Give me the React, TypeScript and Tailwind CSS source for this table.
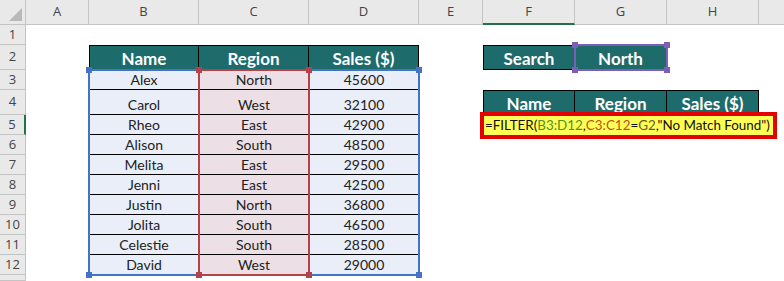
const colLetters = ['A', 'B', 'C', 'D', 'E', 'F', 'G', 'H'];

const rows: [string, string, string][] = [
  ['Alex', 'North', '45600'],
  ['Carol', 'West', '32100'],
  ['Rheo', 'East', '42900'],
  ['Alison', 'South', '48500'],
  ['Melita', 'East', '29500'],
  ['Jenni', 'East', '42500'],
  ['Justin', 'North', '36800'],
  ['Jolita', 'South', '46500'],
  ['Celestie', 'South', '28500'],
  ['David', 'West', '29000'],
];

const headCell = 'flex items-end justify-center pb-0 bg-[#1e6b6c] text-white font-bold text-[17px] leading-[20px] border-y border-r border-black';
const dataCell = 'flex items-end justify-center pb-0 text-[14px] leading-[18px] text-[#222] border-b border-black';

const Handle = ({ pos, color }: { pos: string; color: string }) => (
  <span className={`absolute w-[6px] h-[6px] ${pos} ${color}`} />
);

const Corners = ({ color }: { color: string }) => (
  <>
    <Handle pos="-left-[4px] -top-[4px]" color={color} />
    <Handle pos="-right-[4px] -top-[4px]" color={color} />
    <Handle pos="-left-[4px] -bottom-[4px]" color={color} />
    <Handle pos="-right-[4px] -bottom-[4px]" color={color} />
  </>
);

function bodyCell(r: number, c: number) {
  // r: sheet row 1..13, c: 0..8 for columns A..I
  if (r === 2) {
    if (c === 1) return <div className={`${headCell} border-l`}>Name</div>;
    if (c === 2) return <div className={headCell}>Region</div>;
    if (c === 3) return <div className={headCell}>Sales ($)</div>;
    if (c === 5) return <div className={`${headCell} border-l`}>Search</div>;
    if (c === 6) return <div className={headCell}>North</div>;
  }
  if (r === 4) {
    if (c === 5) return <div className={`${headCell} border-l`}>Name</div>;
    if (c === 6) return <div className={headCell}>Region</div>;
    if (c === 7) return <div className={headCell}>Sales ($)</div>;
  }
  if (r >= 3 && r <= 12 && c >= 1 && c <= 3) {
    const row = rows[r - 3];
    const bg = c === 2 ? 'bg-[#ecdfe6]' : 'bg-[#e9eef8]';
    return <div className={`${dataCell} ${bg}`}>{row[c - 1]}</div>;
  }
  return <div />;
}

export default function App() {
  const sheetRows = Array.from({ length: 13 }, (_, i) => i + 1);

  return (
    <div className="w-[784px] h-[281px] overflow-hidden bg-white font-[Lato,sans-serif]">
      <div className="relative grid grid-cols-[26px_63px_110px_110px_110px_64px_92px_92px_92px_1fr] grid-rows-[25px_20px_25px_20px_25px_20px_20px_20px_20px_20px_20px_20px_20px_6px]">
        {/* column headers */}
        <div className="relative bg-[#e9e9e9] border-r border-b border-[#c4c4c4]">
          <span className="absolute right-[3px] bottom-[3px] w-0 h-0 border-l-[13px] border-l-transparent border-b-[13px] border-b-[#b9b9b9]" />
        </div>
        {colLetters.map((l) => (
          <div
            key={l}
            className={`flex items-center justify-center bg-[#e9e9e9] border-r border-[#c4c4c4] text-[13px] text-[#444] font-['Open_Sans',sans-serif] ${
              l === 'F' ? 'border-b-2 border-b-[#217346]' : 'border-b'
            }`}
          >
            {l}
          </div>
        ))}
        <div className="bg-[#e9e9e9] border-b border-[#c4c4c4]" />

        {sheetRows.map((r) => (
          <div key={r} className="contents">
            <div
              className={`flex items-center justify-center bg-[#e9e9e9] border-b border-[#c4c4c4] text-[13px] text-[#444] font-['Open_Sans',sans-serif] ${
                r === 5 ? 'border-r-2 border-r-[#217346]' : 'border-r'
              }`}
            >
              {r < 13 ? r : null}
            </div>
            {Array.from({ length: 9 }, (_, c) => (
              <div key={c} className="contents">
                {bodyCell(r, c)}
              </div>
            ))}
          </div>
        ))}

        {/* range highlights */}
        <div className="absolute left-[88px] top-[69px] w-[332px] h-[207px] border-2 border-[#4472c4]">
          <Corners color="bg-[#4472c4]" />
        </div>
        <div className="absolute left-[198px] top-[69px] w-[112px] h-[207px] border-2 border-[#b4424b]">
          <Corners color="bg-[#b4424b]" />
        </div>
        <div className="absolute left-[574px] top-[44px] w-[94px] h-[27px] border-2 border-[#7f5fb5]">
          <Corners color="bg-[#7f5fb5]" />
        </div>

        {/* formula callout */}
        <div className="absolute left-[480px] top-[112px] w-[297px] h-[27px] border-4 border-[#e50000] bg-[#ffff55] flex items-center pl-[1px] text-[13.4px] leading-[17px] text-[#111] whitespace-nowrap">
          <span>=FILTER(</span>
          <span className="text-[#4f8f1f]">B3:D12</span>
          <span>,</span>
          <span className="text-[#c24f1c]">C3:C12</span>
          <span>=</span>
          <span className="text-[#6b5a2a]">G2</span>
          <span>,"No Match Found")</span>
        </div>
      </div>
    </div>
  );
}
